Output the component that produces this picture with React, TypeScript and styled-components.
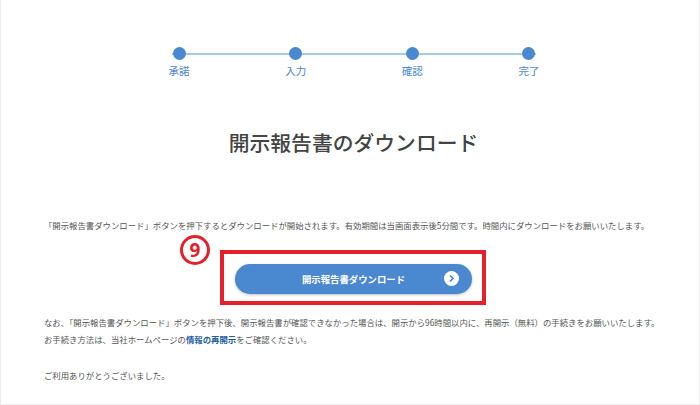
import styled, { createGlobalStyle } from "styled-components";

const GlobalStyle = createGlobalStyle`
  html, body {
    margin: 0;
    padding: 0;
    background: #fff;
  }
`;

const Card = styled.main`
  box-sizing: border-box;
  width: 700px;
  height: 405px;
  overflow: hidden;
  padding: 47px 0 0 43px;
  background: #fff;
  border: 1px solid #ececec;
  border-top: none;
  font-family: "Noto Sans CJK JP", "Noto Sans", sans-serif;
  color: #555;
`;

const Stepper = styled.ol`
  display: flex;
  justify-content: space-between;
  width: 364px;
  margin: 0 0 0 128px;
  padding: 0;
  list-style: none;
  background: linear-gradient(#a9c8e8, #a9c8e8) no-repeat center 6px / 100% 2px;
`;

const Step = styled.li`
  display: flex;
  flex-direction: column;
  align-items: center;
  width: 14px;
  gap: 4px;
`;

const Dot = styled.span`
  width: 13px;
  height: 13px;
  flex: none;
  border-radius: 50%;
  background: #4a88cf;
`;

const StepLabel = styled.span`
  font-size: 10.5px;
  line-height: 14px;
  white-space: nowrap;
  color: #4a88cf;
`;

const Title = styled.h1`
  margin: 49px 0 0 -36px;
  font-size: 20.8px;
  line-height: 30px;
  font-weight: 500;
  text-align: center;
  color: #444;
`;

const Text = styled.p`
  margin: 0;
  font-size: 8.4px;
  line-height: 17px;
  white-space: nowrap;
  color: #555;
`;

const Lead = styled(Text)`
  margin-top: 60px;
`;

const ButtonArea = styled.div`
  position: relative;
  display: flex;
  justify-content: center;
  width: 613px;
  margin-top: 30px;
  padding-left: 1px;
`;

const DownloadButton = styled.a`
  position: relative;
  display: flex;
  align-items: center;
  justify-content: center;
  box-sizing: border-box;
  width: 237px;
  height: 30px;
  margin-left: 3px;
  padding-left: 1px;
  border-radius: 15px;
  background: #4a88cf;
  box-shadow: 0 1px 3px rgba(0, 0, 0, 0.25);
  font-size: 9.4px;
  font-weight: 700;
  color: #fff;
`;

const ArrowBadge = styled.span`
  position: absolute;
  right: 13px;
  top: 7px;
  display: flex;
  align-items: center;
  justify-content: center;
  width: 15px;
  height: 15px;
  border-radius: 50%;
  background: #fff;
`;

const RedFrame = styled.div`
  position: absolute;
  left: 176px;
  top: -14px;
  box-sizing: border-box;
  width: 266px;
  height: 55px;
  border: 4px solid #e5202a;
`;

const NumberBadge = styled.span`
  position: absolute;
  left: 136px;
  top: -29px;
  box-sizing: border-box;
  display: flex;
  align-items: center;
  justify-content: center;
  width: 30px;
  height: 30px;
  border: 3px solid #e5202a;
  border-radius: 50%;
  background: #fff;
  font-family: "Noto Sans", sans-serif;
  font-size: 19px;
  font-weight: 700;
  color: #e5202a;
`;

const Notes = styled.div`
  margin-top: 20px;
`;

const Thanks = styled(Text)`
  margin-top: 19px;
`;

const InfoLink = styled.a`
  font-weight: 700;
  color: #1f5f9e;
`;

const steps = ["承諾", "入力", "確認", "完了"];

export default function App() {
  return (
    <>
      <GlobalStyle />
      <Card>
        <Stepper>
          {steps.map((step) => (
            <Step key={step}>
              <Dot />
              <StepLabel>{step}</StepLabel>
            </Step>
          ))}
        </Stepper>
        <Title>開示報告書のダウンロード</Title>
        <Lead>
          「開示報告書ダウンロード」ボタンを押下するとダウンロードが開始されます。有効期間は当画面表示後5分間です。時間内にダウンロードをお願いいたします。
        </Lead>
        <ButtonArea>
          <RedFrame />
          <NumberBadge>9</NumberBadge>
          <DownloadButton>
            開示報告書ダウンロード
            <ArrowBadge>
              <svg width="9" height="9" viewBox="0 0 9 9" fill="none">
                <path d="M3 1.5 6 4.5 3 7.5" stroke="#4a88cf" strokeWidth="1.7" />
              </svg>
            </ArrowBadge>
          </DownloadButton>
        </ButtonArea>
        <Notes>
          <Text>
            なお、「開示報告書ダウンロード」ボタンを押下後、開示報告書が確認できなかった場合は、開示から96時間以内に、再開示（無料）の手続きをお願いいたします。
          </Text>
          <Text>
            お手続き方法は、当社ホームページの<InfoLink>情報の再開示</InfoLink>をご確認ください。
          </Text>
          <Thanks>ご利用ありがとうございました。</Thanks>
        </Notes>
      </Card>
    </>
  );
}
